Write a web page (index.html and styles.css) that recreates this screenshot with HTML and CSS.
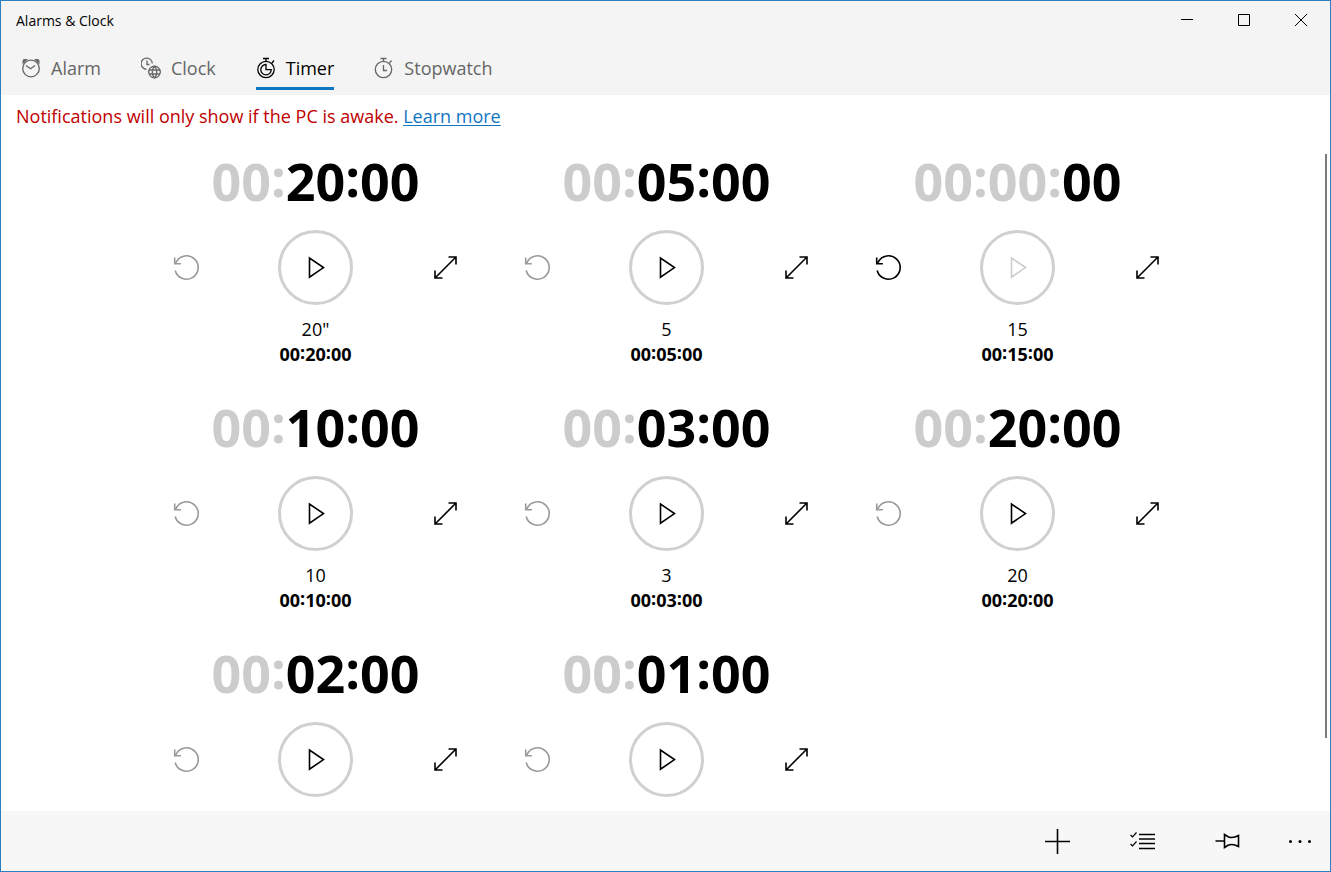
FILE: index.html
```html
<!DOCTYPE html>
<html lang="en">
  <head>
    <meta charset="UTF-8" />
    <meta name="viewport" content="width=device-width, initial-scale=1.0" />
    <title>Alarms &amp; Clock</title>
    <link rel="stylesheet" href="styles.css">
  </head>
  <body>
    <svg class="icon-defs" aria-hidden="true">
      <symbol id="icon-reset" viewBox="0 0 28 28">
        <path d="M3.200 16.500A11.700 11.700 0 1 0 4.200 8L3.100 9.500" />
        <path d="M2.700 3.500V9.700H8.900" />
      </symbol>
      <symbol id="icon-play" viewBox="0 0 28 28">
        <path d="M7.500 4V23.200L21.500 13.600Z" />
      </symbol>
      <symbol id="icon-expand" viewBox="0 0 28 28">
        <path d="M4.300 23.700L24.700 3.300M17.500 3H25V10.500M4 16.500V24H11.500" />
      </symbol>
    </svg>

    <div class="window">
      <header class="header">
        <div class="titlebar">
          <h1 class="title">Alarms &amp; Clock</h1>
          <div class="window-buttons">
            <button class="window-button" aria-label="Minimize">
              <svg width="12" height="12"><path d="M0 5.5H12" /></svg>
            </button>
            <button class="window-button" aria-label="Maximize">
              <svg width="12" height="12"><path d="M.5.5H11.5V11.5H.5Z" /></svg>
            </button>
            <button class="window-button" aria-label="Close">
              <svg width="12" height="12"><path d="M0 0L12 12M12 0L0 12" /></svg>
            </button>
          </div>
        </div>
        <nav class="tabs">
          <a class="tab" href="#alarm">
            <svg width="20" height="22" viewBox="0 0 20 22">
              <circle cx="10" cy="11.500" r="8.300" />
              <path d="M5 8.500L9.500 11.800L14 8.500" />
              <path class="solid" d="M1.500 7.500V4Q1.500 2 3.500 2H7ZM18.500 7.500V4Q18.500 2 16.500 2H13Z" />
            </svg>
            Alarm
          </a>
          <a class="tab" href="#clock">
            <svg width="20" height="22" viewBox="1 0 20 22">
              <path d="M6.500 12.300A5.600 5.600 0 1 1 12.300 6.500M7 3.500V7.500H9.500" />
              <circle cx="14.500" cy="15" r="5.800" />
              <path d="M9 13H20M9 17H20M14.500 9C11.500 12 11.500 18 14.500 21M14.500 9C17.500 12 17.500 18 14.500 21" />
            </svg>
            Clock
          </a>
          <a class="tab active" href="#timer" aria-current="page">
            <svg width="20" height="22" viewBox="0 0 20 22">
              <circle cx="10" cy="12.500" r="8.200" />
              <path d="M7 1.500H13M10 1.500V4.500M16 6L18 3.500" />
              <path d="M10 7.500A5.200 5.200 0 1 0 15.200 12.700H10Z" />
            </svg>
            Timer
          </a>
          <a class="tab" href="#stopwatch">
            <svg width="20" height="22" viewBox="0 0 20 22">
              <circle cx="9.500" cy="12.500" r="8.200" />
              <path d="M6.500 1.500H12.500M9.500 1.500V4.500M15.500 6L17.500 3.500M9.500 8V13.500H13" />
            </svg>
            Stopwatch
          </a>
        </nav>
      </header>

      <main class="content">
        <p class="notice">Notifications will only show if the PC is awake. <a href="#learn">Learn more</a></p>

        <div class="timers">
          <section class="timer">
            <div class="time"><span class="dim">00<i>:</i></span>20<i>:</i>00</div>
            <div class="controls">
              <button class="control" aria-label="Reset" disabled><svg><use href="#icon-reset" /></svg></button>
              <button class="play" aria-label="Start"><svg><use href="#icon-play" /></svg></button>
              <button class="control" aria-label="Expand"><svg><use href="#icon-expand" /></svg></button>
            </div>
            <div class="name">20"</div>
            <div class="total">00<i>:</i>20<i>:</i>00</div>
          </section>

          <section class="timer">
            <div class="time"><span class="dim">00<i>:</i></span>05<i>:</i>00</div>
            <div class="controls">
              <button class="control" aria-label="Reset" disabled><svg><use href="#icon-reset" /></svg></button>
              <button class="play" aria-label="Start"><svg><use href="#icon-play" /></svg></button>
              <button class="control" aria-label="Expand"><svg><use href="#icon-expand" /></svg></button>
            </div>
            <div class="name">5</div>
            <div class="total">00<i>:</i>05<i>:</i>00</div>
          </section>

          <section class="timer">
            <div class="time"><span class="dim">00<i>:</i>00<i>:</i></span>00</div>
            <div class="controls">
              <button class="control" aria-label="Reset"><svg><use href="#icon-reset" /></svg></button>
              <button class="play" aria-label="Start" disabled><svg><use href="#icon-play" /></svg></button>
              <button class="control" aria-label="Expand"><svg><use href="#icon-expand" /></svg></button>
            </div>
            <div class="name">15</div>
            <div class="total">00<i>:</i>15<i>:</i>00</div>
          </section>

          <section class="timer">
            <div class="time"><span class="dim">00<i>:</i></span>10<i>:</i>00</div>
            <div class="controls">
              <button class="control" aria-label="Reset" disabled><svg><use href="#icon-reset" /></svg></button>
              <button class="play" aria-label="Start"><svg><use href="#icon-play" /></svg></button>
              <button class="control" aria-label="Expand"><svg><use href="#icon-expand" /></svg></button>
            </div>
            <div class="name">10</div>
            <div class="total">00<i>:</i>10<i>:</i>00</div>
          </section>

          <section class="timer">
            <div class="time"><span class="dim">00<i>:</i></span>03<i>:</i>00</div>
            <div class="controls">
              <button class="control" aria-label="Reset" disabled><svg><use href="#icon-reset" /></svg></button>
              <button class="play" aria-label="Start"><svg><use href="#icon-play" /></svg></button>
              <button class="control" aria-label="Expand"><svg><use href="#icon-expand" /></svg></button>
            </div>
            <div class="name">3</div>
            <div class="total">00<i>:</i>03<i>:</i>00</div>
          </section>

          <section class="timer">
            <div class="time"><span class="dim">00<i>:</i></span>20<i>:</i>00</div>
            <div class="controls">
              <button class="control" aria-label="Reset" disabled><svg><use href="#icon-reset" /></svg></button>
              <button class="play" aria-label="Start"><svg><use href="#icon-play" /></svg></button>
              <button class="control" aria-label="Expand"><svg><use href="#icon-expand" /></svg></button>
            </div>
            <div class="name">20</div>
            <div class="total">00<i>:</i>20<i>:</i>00</div>
          </section>

          <section class="timer">
            <div class="time"><span class="dim">00<i>:</i></span>02<i>:</i>00</div>
            <div class="controls">
              <button class="control" aria-label="Reset" disabled><svg><use href="#icon-reset" /></svg></button>
              <button class="play" aria-label="Start"><svg><use href="#icon-play" /></svg></button>
              <button class="control" aria-label="Expand"><svg><use href="#icon-expand" /></svg></button>
            </div>
          </section>

          <section class="timer">
            <div class="time"><span class="dim">00<i>:</i></span>01<i>:</i>00</div>
            <div class="controls">
              <button class="control" aria-label="Reset" disabled><svg><use href="#icon-reset" /></svg></button>
              <button class="play" aria-label="Start"><svg><use href="#icon-play" /></svg></button>
              <button class="control" aria-label="Expand"><svg><use href="#icon-expand" /></svg></button>
            </div>
          </section>
        </div>
        <div class="scroll-thumb"></div>
      </main>

      <footer class="command-bar">
        <button class="command" aria-label="Add new timer">
          <svg width="26" height="26"><path d="M0 13.500H25M12.500 1V26" /></svg>
        </button>
        <button class="command" aria-label="Select timers">
          <svg width="26" height="26"><path d="M9 6.500H25M9 11H25M9 15.500H25M9 20.500H25" /><path class="thin" d="M.5 7L2.500 9L6.500 4.500M.5 16L2.500 18L6.500 13.500" /></svg>
        </button>
        <button class="command" aria-label="Pin timer to Start">
          <svg width="26" height="26"><path d="M.5 13H9M9.500 6.500V19.500L13.500 17Q18 15.500 23.500 18.500V7.500Q18 10.500 13.500 9Z" /></svg>
        </button>
        <button class="command more" aria-label="More">
          <svg width="24" height="26"><circle cx="2.500" cy="13.500" r="1.500" /><circle cx="12" cy="13.500" r="1.500" /><circle cx="21.500" cy="13.500" r="1.500" /></svg>
        </button>
      </footer>
    </div>
  </body>
</html>
```
FILE: styles.css
```css
* {
  box-sizing: border-box;
}
body {
  margin: 0;
  font-family: "Open Sans", "Noto Sans", sans-serif;
  color: #000;
}
button {
  display: flex;
  justify-content: center;
  align-items: center;
  padding: 0;
  border: none;
  background: none;
  color: inherit;
}
svg {
  display: block;
  flex: none;
  fill: none;
  stroke: currentColor;
}
.icon-defs {
  position: absolute;
  width: 0;
  height: 0;
}
.window {
  display: flex;
  flex-direction: column;
  height: 100vh;
  border: 1px solid #2b7fc0;
  background: #fff;
}

/* Title bar and tabs */
.header {
  flex: none;
  background: #f4f4f4;
}
.titlebar {
  display: flex;
  justify-content: space-between;
  height: 38px;
  padding: 0 1px 0 15px;
}
.title {
  margin: 0;
  font-size: 14px;
  font-weight: 400;
  line-height: 40px;
}
.window-buttons {
  display: flex;
}
.window-button {
  width: 57px;
}
.tabs {
  display: flex;
  gap: 40px;
  height: 56px;
  padding: 10px 20px 0;
}
.tab {
  display: flex;
  align-items: center;
  gap: 10px;
  height: 41px;
  border-bottom: 3px solid transparent;
  color: #666;
  font-size: 18px;
  text-decoration: none;
}
.tab.active {
  border-color: #0f76c4;
  color: #000;
}
.tab svg {
  stroke-width: 1.3;
}
.tab .solid {
  fill: currentColor;
  stroke: none;
}

/* Timers */
.content {
  position: relative;
  flex: 1;
  min-height: 0;
  overflow: hidden;
}
.notice {
  margin: 0;
  padding: 7px 15px 0;
  color: #c00000;
  font-size: 18px;
  line-height: 28px;
}
.notice a {
  color: #0f76c4;
  text-underline-offset: 2px;
}
.timers {
  display: grid;
  grid-template-columns: repeat(auto-fill, 351px);
  justify-content: center;
  padding: 19px 0 0 2px;
}
.timer {
  height: 246px;
  text-align: center;
}
.time {
  font-size: 52px;
  font-weight: 700;
  line-height: 64px;
}
.dim {
  color: #ccc;
}
/* colons sit in the middle of the digits */
.time i,
.total i {
  font-style: normal;
  line-height: 0;
  vertical-align: 4px;
}
.total i {
  vertical-align: 2px;
}
.controls {
  display: flex;
  justify-content: space-between;
  align-items: center;
  padding: 17px 31px 12px;
}
.control {
  width: 30px;
  height: 30px;
}
.control svg,
.play svg {
  width: 28px;
  height: 28px;
  stroke-width: 1.6;
}
.control:disabled {
  color: #999;
}
.play {
  width: 75px;
  height: 75px;
  border: 3px solid #d0d0d0;
  border-radius: 50%;
}
.play:disabled {
  color: #ccc;
}
.name,
.total {
  font-size: 18px;
  line-height: 25px;
}
.total {
  font-weight: 700;
}
.scroll-thumb {
  position: absolute;
  top: 59px;
  right: 3px;
  bottom: 73px;
  width: 2px;
  background: #7a7a7a;
}

/* Command bar */
.command-bar {
  display: flex;
  flex: none;
  justify-content: flex-end;
  height: 60px;
  background: #f7f7f7;
}
.command {
  width: 85px;
}
.command svg {
  stroke-width: 1.6;
}
.command .thin {
  stroke-width: 1.2;
}
.command.more {
  width: 60px;
}
.more svg {
  fill: currentColor;
  stroke: none;
}
```
